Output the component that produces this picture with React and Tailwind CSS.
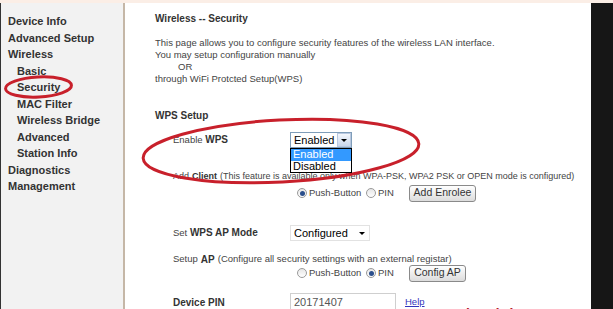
import React from 'react';

const font = { fontFamily: '"Liberation Sans", Arial, sans-serif' };

function Radio({ checked }) {
  return (
    <span className="inline-flex shrink-0 items-center justify-center w-[10px] h-[10px] rounded-full border border-[#9a9a9a] bg-gradient-to-b from-[#e6e6e6] to-white mr-[2px]">
      {checked && <span className="w-[5px] h-[5px] rounded-full bg-[#2b4f8c]" />}
    </span>
  );
}

function Button({ children, width }) {
  return (
    <span
      className={`inline-flex shrink-0 items-center justify-center h-[17px] ${width} rounded-[3px] border border-[#8a8a8a] bg-gradient-to-b from-white to-[#dcdcdc] text-[10.5px] text-[#333] whitespace-nowrap`}
    >
      {children}
    </span>
  );
}

const sideItems = [
  { label: 'Device Info', sub: false },
  { label: 'Advanced Setup', sub: false },
  { label: 'Wireless', sub: false },
  { label: 'Basic', sub: true },
  { label: 'Security', sub: true },
  { label: 'MAC Filter', sub: true },
  { label: 'Wireless Bridge', sub: true },
  { label: 'Advanced', sub: true },
  { label: 'Station Info', sub: true },
  { label: 'Diagnostics', sub: false },
  { label: 'Management', sub: false },
];

export default function App() {
  return (
    <div className="relative w-[613px] h-[309px] overflow-hidden bg-white flex flex-col" style={font}>
      <div className="h-[3px] shrink-0 bg-[#fbeee6]" />
      <div className="flex flex-1 min-h-0">
        {/* sidebar */}
        <div className="w-[125px] shrink-0 bg-[#f2f2f2] border-r-2 border-[#c5b7a7] border-l border-l-[#333] pt-[10px]">
          {sideItems.map(item => (
            <div
              key={item.label}
              className={`h-[16.5px] flex items-center font-bold text-[11px] text-[#333] whitespace-nowrap ${item.sub ? 'pl-[16px]' : 'pl-[7px]'}`}
            >
              {item.label}
            </div>
          ))}
        </div>

        {/* main */}
        <div className="flex-1 min-w-0 overflow-hidden bg-white pl-[30px] pt-[9px] text-[9.5px] text-[#444] whitespace-nowrap">
          <div className="h-[12px] flex items-center font-bold text-[10px] text-[#333]">Wireless -- Security</div>
          <div className="mt-[13px] leading-[12px]">
            <div>This page allows you to configure security features of the wireless LAN interface.</div>
            <div>You may setup configuration manually</div>
            <div className="pl-[23px]">OR</div>
            <div>through WiFi Protcted Setup(WPS)</div>
          </div>
          <div className="mt-[24px] h-[12px] flex items-center font-bold text-[10px] text-[#333]">WPS Setup</div>

          <div className="mt-[11px] h-[16px] flex items-center">
            <div className="w-[135px] shrink-0 pl-[18px]">
              Enable <span className="font-bold text-[10px] text-[#333]">WPS</span>
            </div>
            <div className="relative">
              <div className="w-[62px] h-[16px] border border-[#7f9db9] bg-white flex items-center text-[11px] text-black">
                <span className="flex-1 pl-[3px]">Enabled</span>
                <span className="w-[14px] h-[14px] border border-[#b8c8e0] bg-gradient-to-b from-[#f4f7fc] to-[#c9d6ea] flex items-center justify-center">
                  <span className="w-0 h-0 border-l-[3px] border-r-[3px] border-t-[3px] border-l-transparent border-r-transparent border-t-black" />
                </span>
              </div>
              <div className="absolute left-0 top-[16px] w-[62px] border border-black bg-white text-[11px] text-black leading-[11.5px] z-10">
                <div className="bg-[#3399ff] text-white pl-[2px]">Enabled</div>
                <div className="pl-[2px]">Disabled</div>
              </div>
            </div>
          </div>

          <div className="mt-[23px] h-[12px] flex items-center pl-[18px] text-[9px]">
            Add <span className="font-bold text-[#333] mx-[3px]">Client</span> (This feature is available only when WPA-PSK, WPA2 PSK or OPEN mode is configured)
          </div>
          <div className="mt-[2px] h-[16px] flex items-center">
            <div className="w-[142px] shrink-0" />
            <Radio checked />
            <span className="w-[57px] shrink-0">Push-Button</span>
            <Radio />
            <span className="w-[31px] shrink-0">PIN</span>
            <Button width="w-[67px]">Add Enrolee</Button>
          </div>

          <div className="mt-[24px] h-[16px] flex items-center">
            <div className="w-[135px] shrink-0 pl-[18px]">
              Set <span className="font-bold text-[10px] text-[#333]">WPS AP Mode</span>
            </div>
            <div className="w-[80px] h-[16px] border border-[#e2e2e2] bg-white flex items-center text-[11px] text-black">
              <span className="flex-1 pl-[3px]">Configured</span>
              <span className="w-[14px] flex items-center justify-center">
                <span className="w-0 h-0 border-l-[3px] border-r-[3px] border-t-[3px] border-l-transparent border-r-transparent border-t-black" />
              </span>
            </div>
          </div>

          <div className="mt-[12px] h-[12px] flex items-center pl-[18px]">
            Setup <span className="font-bold text-[10px] text-[#333] mx-[3px]">AP</span> (Configure all security settings with an external registar)
          </div>
          <div className="h-[16px] flex items-center">
            <div className="w-[142px] shrink-0" />
            <Radio />
            <span className="w-[57px] shrink-0">Push-Button</span>
            <Radio checked />
            <span className="w-[31px] shrink-0">PIN</span>
            <Button width="w-[57px]">Config AP</Button>
          </div>

          <div className="mt-[13px] h-[16px] flex items-center">
            <div className="w-[135px] shrink-0 pl-[18px] font-bold text-[10px] text-[#333]">Device PIN</div>
            <div className="w-[106px] h-[18px] shrink-0 border border-[#cfcfcf] bg-white pl-[3px] flex items-center text-[11px] text-[#555]">
              20171407
            </div>
            <a className="ml-[9px] text-[#3333bb] underline">Help</a>
          </div>
        </div>

        <div className="w-[22px] shrink-0 bg-[#161616]" />
      </div>

      {/* red marks drawn over the screenshot */}
      <svg className="absolute left-0 top-0 pointer-events-none" width="613" height="309">
        <ellipse cx="38.5" cy="87" rx="33" ry="10" transform="rotate(-3 38.5 87)" fill="none" stroke="#c8202b" strokeWidth="3" />
        <ellipse cx="281" cy="151" rx="138" ry="31" transform="rotate(-3 281 151)" fill="none" stroke="#c8202b" strokeWidth="3" />
      </svg>
      <div className="absolute left-[440px] top-[304px] text-[14px] font-bold text-[#b3202b] tracking-[1px] whitespace-nowrap">Tech Advisor</div>
    </div>
  );
}
